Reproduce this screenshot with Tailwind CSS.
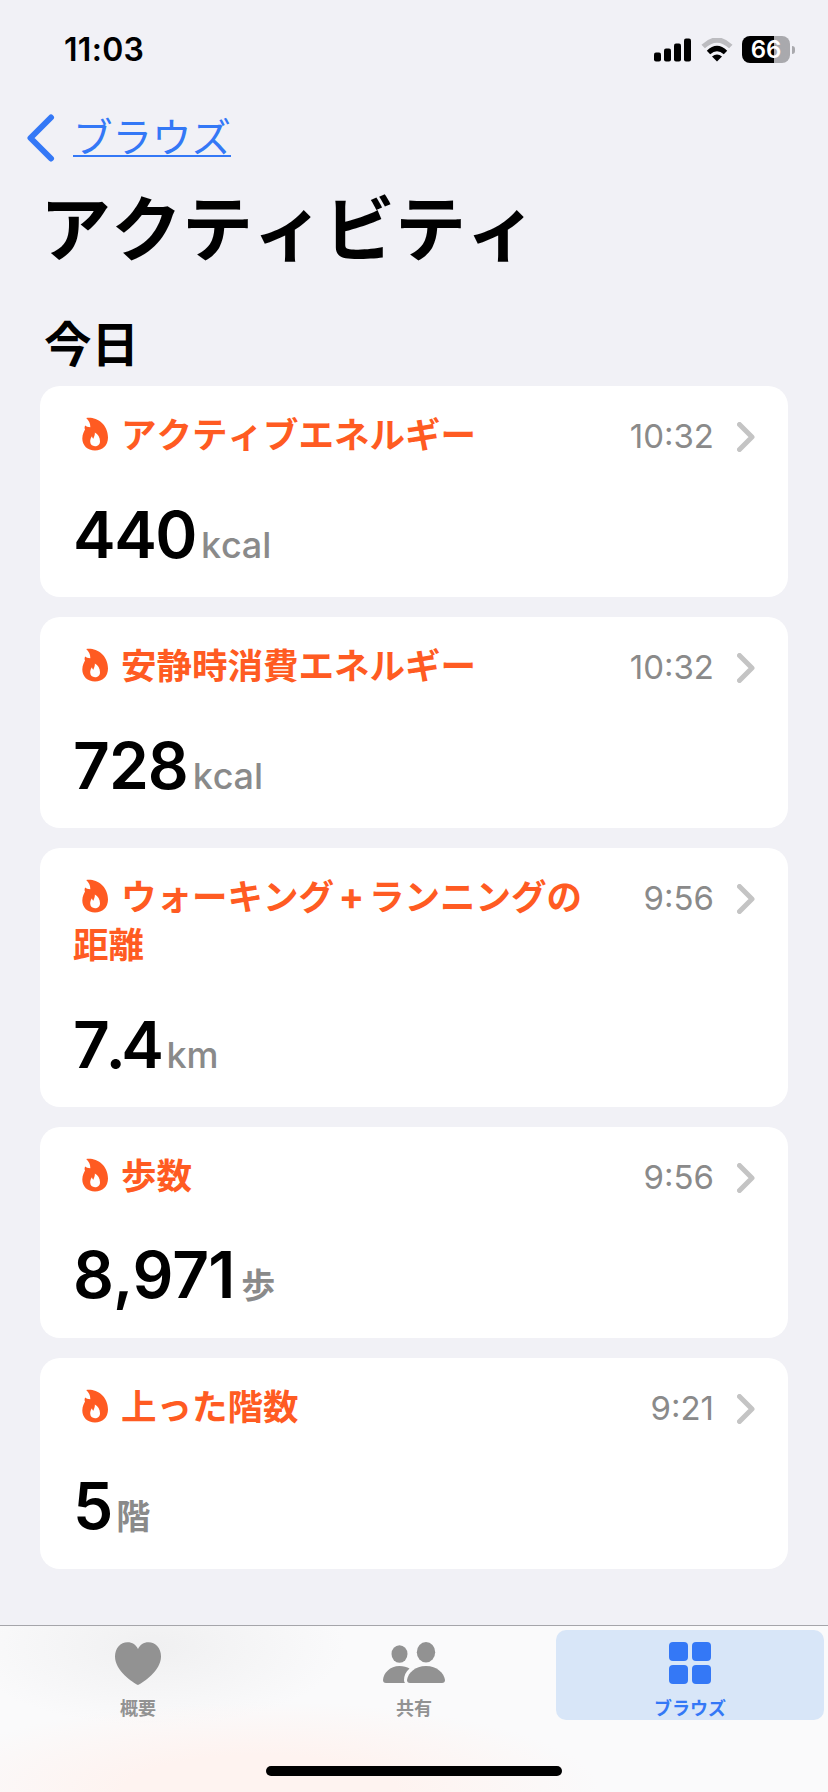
<!DOCTYPE html>
<html lang="ja">
<head>
  <meta charset="UTF-8">
  <title>アクティビティ</title>
  <script src="https://cdn.jsdelivr.net/npm/@tailwindcss/browser@4"></script>
</head>
<body class="bg-[#f1f1f6] text-black font-['Inter','Noto_Sans_CJK_JP',sans-serif] [font-kerning:none]">
  <!-- Shared icons -->
  <svg class="hidden">
    <symbol id="flame" viewBox="0 0 26 34">
      <path fill-rule="evenodd" d="M4.200 1C13 -.8 26 6 26 20.500C26 28.500 20.500 33.500 13 33.500C5.500 33.500 .3 28.500 .3 21.500C.3 17 2.300 14 3 12.500C2.300 11 2.600 9.500 3.200 8.500C4.500 9.800 5.800 9.800 8.300 10.300C8.500 6.500 7 4 4.200 1ZM12.800 15.500C13.200 18.500 11.600 20 11.400 21.800C10.500 21.200 10.200 20.200 10 19.200C8.600 21 8.200 22.800 8.200 24.500C8.200 27.400 10.200 29.200 13 29.200C15.800 29.200 18 27.400 18 24.200C18 20.500 16 17.200 12.800 15.500Z"/>
    </symbol>
    <symbol id="chevron" viewBox="0 0 18 30">
      <path d="M2.500 2.500L15 15L2.500 27.500" fill="none" stroke="currentColor" stroke-width="5" stroke-linecap="round" stroke-linejoin="round"/>
    </symbol>
  </svg>

  <div class="h-[1792px] w-[828px] flex flex-col overflow-hidden">
    <!-- Status bar -->
    <div class="h-[96px] shrink-0 flex items-center justify-between pl-16 pr-[33px] pt-[3px]">
      <div class="text-[32px] leading-none font-semibold tracking-[0.3px]">11:03</div>
      <div class="flex items-center">
        <svg class="w-[37px] h-6" viewBox="0 0 37 24">
          <rect x="0" y="14.500" width="7" height="9" rx="2"/>
          <rect x="10" y="10.500" width="7" height="13" rx="2"/>
          <rect x="20" y="5.500" width="7" height="18" rx="2"/>
          <rect x="30" y="0.500" width="7" height="23" rx="2"/>
        </svg>
        <svg class="w-8 h-6 ml-2.5" viewBox="0 0 32 24">
          <path d="M2.200 8.500Q16 -4.500 29.800 8.500" fill="none" stroke="#bcbcc0" stroke-width="5"/>
          <path d="M7.500 14.500Q16 6.500 24.500 14.500" fill="none" stroke="#000" stroke-width="5"/>
          <path d="M11 18.500Q16 14.500 21 18.500L16 23.500Z"/>
        </svg>
        <div class="ml-[9px] w-12 h-[27px] rounded-[8px] bg-linear-to-r from-black from-66% to-[#a9a9ad] to-66% text-white text-[24px] font-semibold leading-[27px] text-center">66</div>
        <div class="ml-0.5 w-[3px] h-2 rounded-r-full bg-[#a9a9ad]"></div>
      </div>
    </div>

    <!-- Header -->
    <div class="h-[84px] shrink-0 flex items-center pl-[27px] text-[#3478f6]">
      <svg class="w-7 h-[48px]" viewBox="0 0 28 48">
        <path d="M24 3.500L3.500 24L24 44.500" fill="none" stroke="currentColor" stroke-width="6" stroke-linecap="round" stroke-linejoin="round"/>
      </svg>
      <a class="ml-[18px] mb-0.5 h-[39px] border-b-2 border-[#3478f6] text-[39.500px] leading-[40px] font-normal">ブラウズ</a>
    </div>
    <h1 class="h-[100px] shrink-0 pl-10 text-[71px] leading-[98px] font-bold">アクティビティ</h1>
    <h2 class="h-[106px] shrink-0 pl-[44px] pt-[30px] text-[47.500px] leading-[70px] font-bold">今日</h2>

    <!-- Cards -->
    <div class="px-10 flex flex-col gap-5">
      <div class="h-[211px] bg-white rounded-[20px] pl-[33px] pr-[33px] pt-[26px] pb-[22px] flex flex-col justify-between">
        <div class="flex justify-between">
          <div class="w-[530px] text-[35.500px] leading-[48px] font-bold text-[#ff5b22]"><svg class="inline-block w-[26px] h-[34px] ml-[9px] mr-[13px] align-[-3px] fill-[#ff5b22]"><use href="#flame"/></svg>アクティブエネルギー</div>
          <div class="flex items-center h-[49px] text-[33px] text-[#8a8a8a]">10:32<svg class="w-[18px] h-[30px] ml-[23px] text-[#c4c4c4]"><use href="#chevron"/></svg></div>
        </div>
        <div class="flex items-baseline gap-[5px] leading-[60px]"><span class="text-[64px] font-semibold tracking-[-1.500px]">440</span><span class="text-[36px] font-medium text-[#8a8a8a]">kcal</span></div>
      </div>

      <div class="h-[211px] bg-white rounded-[20px] pl-[33px] pr-[33px] pt-[26px] pb-[22px] flex flex-col justify-between">
        <div class="flex justify-between">
          <div class="w-[530px] text-[35.500px] leading-[48px] font-bold text-[#ff5b22]"><svg class="inline-block w-[26px] h-[34px] ml-[9px] mr-[13px] align-[-3px] fill-[#ff5b22]"><use href="#flame"/></svg>安静時消費エネルギー</div>
          <div class="flex items-center h-[49px] text-[33px] text-[#8a8a8a]">10:32<svg class="w-[18px] h-[30px] ml-[23px] text-[#c4c4c4]"><use href="#chevron"/></svg></div>
        </div>
        <div class="flex items-baseline gap-[5px] leading-[60px]"><span class="text-[64px] font-semibold tracking-[-1px]">728</span><span class="text-[36px] font-medium text-[#8a8a8a]">kcal</span></div>
      </div>

      <div class="h-[259px] bg-white rounded-[20px] pl-[33px] pr-[33px] pt-[26px] pb-[22px] flex flex-col justify-between">
        <div class="flex justify-between">
          <div class="w-[530px] text-[35.500px] leading-[48px] font-bold text-[#ff5b22]"><svg class="inline-block w-[26px] h-[34px] ml-[9px] mr-[13px] align-[-3px] fill-[#ff5b22]"><use href="#flame"/></svg>ウォーキング<span class="inline-block w-[35px] text-[38px] text-center leading-none">+</span>ランニングの<br>距離</div>
          <div class="flex items-center h-[49px] text-[33px] text-[#8a8a8a]">9:56<svg class="w-[18px] h-[30px] ml-[23px] text-[#c4c4c4]"><use href="#chevron"/></svg></div>
        </div>
        <div class="flex items-baseline gap-[7px] leading-[60px]"><span class="text-[64px] font-semibold tracking-[-4.500px]">7.4</span><span class="text-[36px] font-medium text-[#8a8a8a]">km</span></div>
      </div>

      <div class="h-[211px] bg-white rounded-[20px] pl-[33px] pr-[33px] pt-[26px] pb-[22px] flex flex-col justify-between">
        <div class="flex justify-between">
          <div class="w-[530px] text-[35.500px] leading-[48px] font-bold text-[#ff5b22]"><svg class="inline-block w-[26px] h-[34px] ml-[9px] mr-[13px] align-[-3px] fill-[#ff5b22]"><use href="#flame"/></svg>歩数</div>
          <div class="flex items-center h-[49px] text-[33px] text-[#8a8a8a]">9:56<svg class="w-[18px] h-[30px] ml-[23px] text-[#c4c4c4]"><use href="#chevron"/></svg></div>
        </div>
        <div class="flex items-baseline gap-[7px] leading-[60px]"><span class="text-[64px] font-semibold tracking-[-1px]">8,971</span><span class="text-[34px] font-bold text-[#8a8a8a]">歩</span></div>
      </div>

      <div class="h-[211px] bg-white rounded-[20px] pl-[33px] pr-[33px] pt-[26px] pb-[22px] flex flex-col justify-between">
        <div class="flex justify-between">
          <div class="w-[530px] text-[35.500px] leading-[48px] font-bold text-[#ff5b22]"><svg class="inline-block w-[26px] h-[34px] ml-[9px] mr-[13px] align-[-3px] fill-[#ff5b22]"><use href="#flame"/></svg>上った階数</div>
          <div class="flex items-center h-[49px] text-[33px] text-[#8a8a8a]">9:21<svg class="w-[18px] h-[30px] ml-[23px] text-[#c4c4c4]"><use href="#chevron"/></svg></div>
        </div>
        <div class="flex items-baseline gap-1 leading-[60px]"><span class="text-[64px] font-semibold tracking-[-1px]">5</span><span class="text-[34px] font-bold text-[#8a8a8a]">階</span></div>
      </div>
    </div>

    <!-- Tab bar -->
    <div class="mt-auto h-[167px] shrink-0 border-t border-[#a5a5aa] flex flex-col justify-between bg-[radial-gradient(ellipse_340px_90px_at_260px_165px,#fef3f0_40%,transparent),radial-gradient(ellipse_190px_80px_at_155px_20px,#f0f0f1,transparent)] bg-[#fafafb]">
      <div class="grid grid-cols-3 pt-1 text-[18px] leading-[22px] font-bold text-[#929292]">
        <div class="h-[90px] mx-1 flex flex-col items-center pt-[12px]">
          <svg class="shrink-0 w-[46px] h-[43px] fill-[#929292]" viewBox="0 0 46 43"><path d="M23 43C18 40.500 0 29 0 14.500C0 6 5.500 .3 12.500 .3C17.500 .3 21 3 23 7C25 3 28.500 .3 33.500 .3C40.500 .3 46 6 46 14.500C46 29 28 40.500 23 43Z"/></svg>
          <div class="mt-[13px]">概要</div>
        </div>
        <div class="h-[90px] mx-1 flex flex-col items-center pt-[12px]">
          <svg class="shrink-0 w-[62px] h-[43px] fill-[#929292]" viewBox="0 0 62 43">
            <ellipse cx="16.500" cy="12" rx="8" ry="8.800"/>
            <ellipse cx="43" cy="10.300" rx="9.200" ry="10.200"/>
            <path d="M3 41Q0 41 0 38C.5 31 7 24 16.500 24C20.500 24 24 25 26.500 26.500C22.500 30 21 34 21 38Q21 40 22 41Z"/>
            <path d="M27 41Q24 41 24 38C25 31 32 24 43 24C54 24 61 31 62 38Q62 41 59 41Z"/>
          </svg>
          <div class="mt-[13px]">共有</div>
        </div>
        <div class="h-[90px] mx-1 flex flex-col items-center pt-[12px] bg-[#d8e6f8] rounded-[10px] text-[#3478f6]">
          <svg class="shrink-0 w-[42px] h-[43px] fill-[#3478f6]" viewBox="0 0 42 43">
            <rect x="0" y="0" width="19" height="19" rx="4"/>
            <rect x="23" y="0" width="19" height="19" rx="4"/>
            <rect x="0" y="23" width="19" height="19" rx="4"/>
            <rect x="23" y="23" width="19" height="19" rx="4"/>
          </svg>
          <div class="mt-[13px]">ブラウズ</div>
        </div>
      </div>
      <div class="mx-auto mb-4 w-[296px] h-2.5 rounded-full bg-black"></div>
    </div>
  </div>
</body>
</html>
